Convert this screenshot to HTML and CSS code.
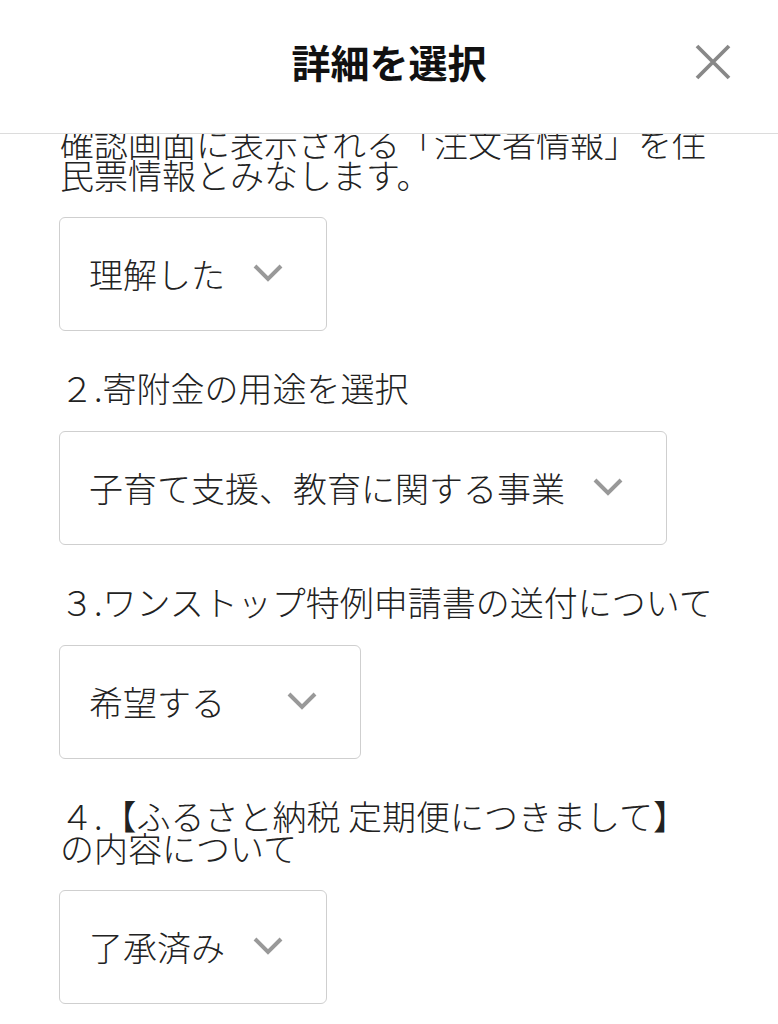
FILE: index.html
```html
<!DOCTYPE html>
<html lang="ja">
<head>
<meta charset="utf-8">
<title>詳細を選択</title>
<link rel="stylesheet" href="styles.css">
</head>
<body>
<div class="sheet">
  <header class="sheet-header">
    <span class="spacer"></span>
    <h1 class="sheet-title">詳細を選択</h1>
    <button class="close-btn" aria-label="閉じる">
      <svg viewBox="0 0 36 36" width="36" height="36"><path d="M2 2 L34 34 M34 2 L2 34" stroke="#888" stroke-width="3.8" fill="none"/></svg>
    </button>
  </header>
  <main class="sheet-body">
    <div class="scroll">
      <p class="notice">確認画面に表示される「注文者情報」を住民票情報とみなします。</p>
      <div class="field field-first">
        <div class="select">
          <span class="select-value"><span class="opt">理解した</span></span>
          <svg class="chev" viewBox="0 0 30 18" width="30" height="18"><polyline points="2,2 15,15 28,2" fill="none" stroke="#999" stroke-width="4"/></svg>
        </div>
      </div>
      <div class="field">
        <label class="field-label">２.寄附金の用途を選択</label>
        <div class="select">
          <span class="select-value"><span class="opt">子育て支援、教育に関する事業</span></span>
          <svg class="chev" viewBox="0 0 30 18" width="30" height="18"><polyline points="2,2 15,15 28,2" fill="none" stroke="#999" stroke-width="4"/></svg>
        </div>
      </div>
      <div class="field">
        <label class="field-label">３.ワンストップ特例申請書の送付について</label>
        <div class="select">
          <span class="select-value"><span class="opt">希望する</span><span class="opt hidden">希望しない</span></span>
          <svg class="chev" viewBox="0 0 30 18" width="30" height="18"><polyline points="2,2 15,15 28,2" fill="none" stroke="#999" stroke-width="4"/></svg>
        </div>
      </div>
      <div class="field">
        <label class="field-label">４.【ふるさと納税 定期便につきまして】<br>の内容について</label>
        <div class="select">
          <span class="select-value"><span class="opt">了承済み</span></span>
          <svg class="chev" viewBox="0 0 30 18" width="30" height="18"><polyline points="2,2 15,15 28,2" fill="none" stroke="#999" stroke-width="4"/></svg>
        </div>
      </div>
    </div>
  </main>
</div>
</body>
</html>
```
FILE: styles.css
```css
* { box-sizing: border-box; }
html, body {
  margin: 0;
  padding: 0;
  background: #fff;
}
body {
  font-family: "Noto Sans CJK JP", "Noto Sans", sans-serif;
  font-weight: 300;
  color: #222;
}
.sheet {
  width: 778px;
  height: 1024px;
  display: flex;
  flex-direction: column;
  overflow: hidden;
}
.sheet-header {
  flex: none;
  height: 134px;
  border-bottom: 1px solid #dcdcdc;
  display: grid;
  grid-template-columns: 1fr auto 1fr;
  align-items: center;
  padding-bottom: 10px;
}
.sheet-title {
  margin: 0;
  font-size: 39px;
  font-weight: 700;
  color: #111;
  line-height: 1;
}
.close-btn {
  justify-self: end;
  margin-right: 47px;
  background: none;
  border: 0;
  padding: 0;
  width: 36px;
  height: 36px;
  display: flex;
}
.sheet-body {
  flex: 1;
  overflow: hidden;
}
.scroll {
  padding: 0 56px 0 59px;
  margin-top: -7px;
}
.notice {
  margin: 0 0 0 1px;
  font-size: 34px;
  line-height: 32px;
}
.field { margin-top: 43px; }
.field-first { margin-top: 26px; }
.field-label {
  display: block;
  margin: -2px 0 27px 1px;
  font-size: 34px;
  line-height: 32px;
}
.field:last-child .field-label { margin-bottom: 26px; }
.select {
  display: inline-flex;
  align-items: center;
  height: 114px;
  border: 1.5px solid #cfcfcf;
  border-radius: 6px;
  padding: 0 43px 0 29px;
  gap: 28px;
  vertical-align: top;
}
.select-value {
  display: grid;
  font-size: 34px;
  line-height: 40px;
}
.opt { grid-area: 1 / 1; white-space: nowrap; }
.opt.hidden { visibility: hidden; }
.chev { flex: none; display: block; margin-top: -2px; }
```
